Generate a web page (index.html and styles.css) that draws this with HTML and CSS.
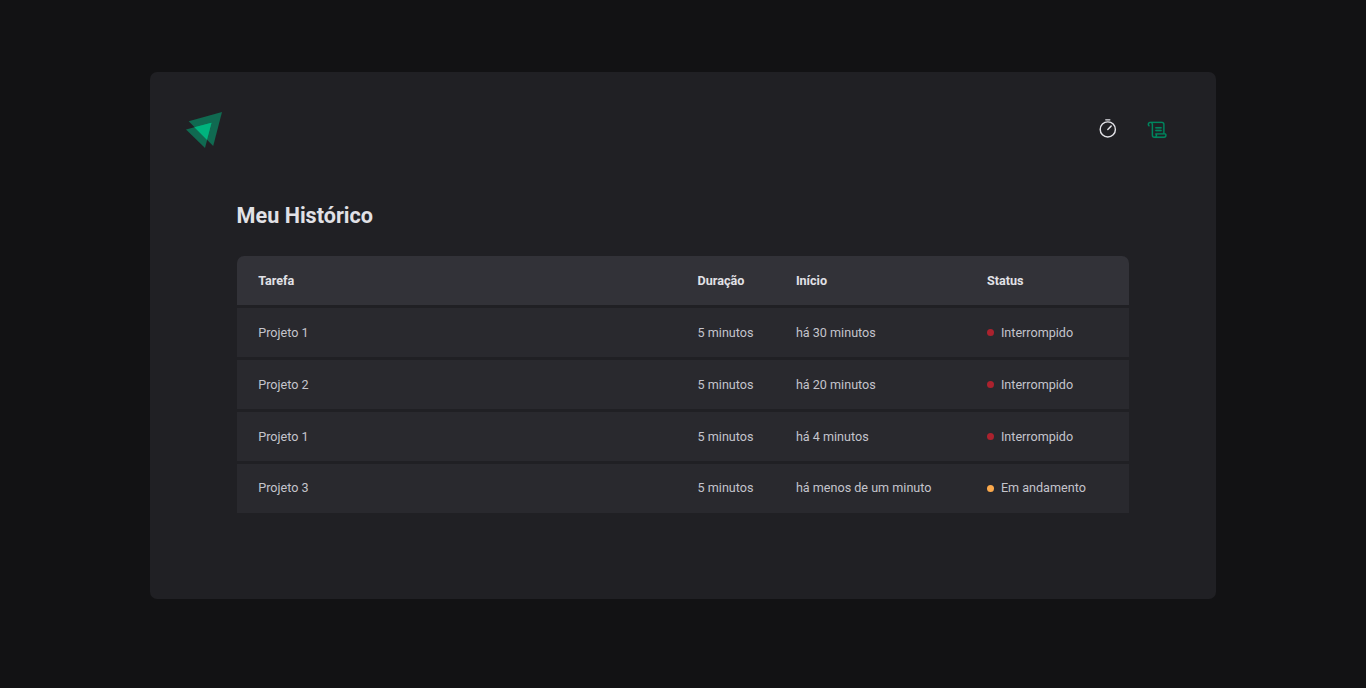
FILE: index.html
```html
<!DOCTYPE html>
<html lang="pt-BR">
<head>
<meta charset="utf-8">
<title>Ignite Timer</title>
<link rel="stylesheet" href="styles.css">
</head>
<body>
<div class="layout">
  <header class="header">
    <svg class="logo" viewBox="0 0 36 36" aria-label="Ignite">
      <path class="logo-back" d="M36 0 2.7 9.2 27.2 34Z"/>
      <path class="logo-back" d="M0 17.6 19 36 25.5 10.7Z"/>
      <path class="logo-front" d="M8.4 15.3 25.5 10.7 20.9 27.8Z"/>
    </svg>
    <nav class="nav">
      <a class="nav-link" title="Timer">
        <svg class="icon" viewBox="0 0 256 256"><g fill="none" stroke="currentColor" stroke-width="17" stroke-linecap="round"><circle cx="128" cy="124" r="90"/><path d="M128 124 167.6 84.4M104 10h48"/></g></svg>
      </a>
      <a class="nav-link active" title="Histórico">
        <svg class="icon" viewBox="0 0 256 256"><path fill="currentColor" stroke="currentColor" stroke-width="2" d="M96,104a8,8,0,0,1,8-8h64a8,8,0,0,1,0,16H104A8,8,0,0,1,96,104Zm8,40h64a8,8,0,0,0,0-16H104a8,8,0,0,0,0,16Zm128,48a32,32,0,0,1-32,32H88a32,32,0,0,1-32-32V64a16,16,0,0,0-32,0c0,5.74,4.83,9.62,4.88,9.66h0A8,8,0,0,1,24,88a7.89,7.89,0,0,1-4.79-1.61h0C18.05,85.54,8,77.61,8,64A32,32,0,0,1,40,32H176a32,32,0,0,1,32,32V168h8a8,8,0,0,1,4.8,1.6C222,170.46,232,178.39,232,192ZM96.26,173.48A8.07,8.07,0,0,1,104,168h88V64a16,16,0,0,0-16-16H67.69A31.71,31.71,0,0,1,72,64V192a16,16,0,0,0,32,0c0-5.74-4.83-9.62-4.88-9.66A7.82,7.82,0,0,1,96.26,173.48ZM216,192a12.58,12.58,0,0,0-3.23-8h-94a26.92,26.92,0,0,1,1.21,8,31.82,31.82,0,0,1-4.29,16H200A16,16,0,0,0,216,192Z"/></svg>
      </a>
    </nav>
  </header>
  <main class="history">
    <h1 class="title">Meu Histórico</h1>
    <div class="table">
      <div class="row head"><span>Tarefa</span><span>Duração</span><span>Início</span><span>Status</span></div>
      <div class="row"><span>Projeto 1</span><span>5 minutos</span><span>há 30 minutos</span><span class="status red">Interrompido</span></div>
      <div class="row"><span>Projeto 2</span><span>5 minutos</span><span>há 20 minutos</span><span class="status red">Interrompido</span></div>
      <div class="row"><span>Projeto 1</span><span>5 minutos</span><span>há 4 minutos</span><span class="status red">Interrompido</span></div>
      <div class="row"><span>Projeto 3</span><span>5 minutos</span><span>há menos de um minuto</span><span class="status yellow">Em andamento</span></div>
    </div>
  </main>
</div>
</body>
</html>
```
FILE: styles.css
```css
* { box-sizing: border-box; margin: 0; padding: 0; }
body { background: #121214; font-family: Roboto, sans-serif; overflow: hidden; }
.layout {
  width: 1066px; height: 527px; margin: 72px auto; padding: 36px;
  background: #202024; border-radius: 7.2px;
  display: flex; flex-direction: column;
}
.header { display: flex; align-items: center; justify-content: space-between; height: 43px; }
.logo { width: 36px; height: 36px; margin-top: 1px; }
.logo-back { fill: #00b37e; opacity: .5; }
.logo-front { fill: #00b37e; }
.nav { display: flex; gap: 8px; }
.nav-link { width: 43px; height: 43px; display: flex; align-items: center; justify-content: center; color: #e1e1e6; }
.nav-link.active { color: #00875f; }
.nav-link.active .icon { margin: 0 1px 0 0; }
.icon { width: 21.6px; height: 21.6px; display: block; }
.history { padding: 52px 51px 0; }
.title { font-size: 21.6px; line-height: 26px; font-weight: 700; color: #e1e1e6; margin-left: -.4px; }
.table { margin-top: 27px; display: grid; row-gap: 3px; border-radius: 7.2px 7.2px 0 0; overflow: hidden; }
.row {
  display: grid; grid-template-columns: 446.2px 98.3px 191px 1fr; align-items: center;
  height: 49px; background: #29292e; color: #c4c4cc; font-size: 12.6px; line-height: 20px;
}
.row > span { padding: 1px 0 0 14.4px; }
.row > span:first-child { padding-left: 21.2px; }
.row:last-child > span { padding: 0 0 1px 14.4px; }
.row:last-child > span:first-child { padding-left: 21.2px; }
.head { background: #323238; color: #e1e1e6; font-weight: 700; }
.status { display: flex; align-items: center; gap: 7px; }
.status::before { content: ""; width: 7px; height: 7px; border-radius: 50%; }
.red::before { background: #ab222e; margin-bottom: 1px; }
.yellow::before { background: #fba94c; margin-top: 1px; }
```
